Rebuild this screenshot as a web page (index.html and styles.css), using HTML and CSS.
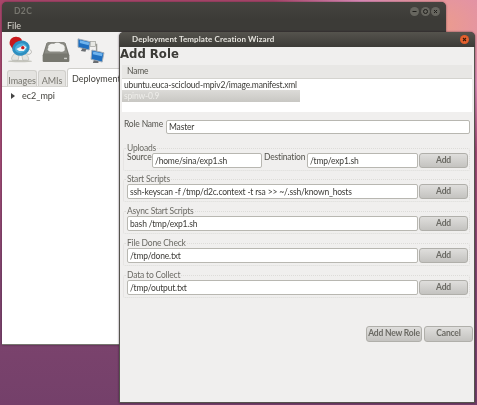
FILE: index.html
```html
<!DOCTYPE html>
<html lang="en">
<head>
<meta charset="utf-8">
<title>D2C</title>
<link rel="stylesheet" href="styles.css">
</head>
<body>
<div class="desktop">
  <section class="win main-win">
    <header class="win-title">
      <span class="win-name">D2C</span>
      <span class="win-controls">
        <span class="ctl"><svg viewBox="0 0 9 9"><path d="M2.500 4.500h4" stroke="#1f1e1b" stroke-width="1"/></svg></span>
        <span class="ctl"><svg viewBox="0 0 9 9"><circle cx="4.500" cy="4.500" r="2" fill="none" stroke="#1f1e1b" stroke-width="1"/></svg></span>
        <span class="ctl"><svg viewBox="0 0 9 9"><path d="M3 3l3 3M6 3l-3 3" stroke="#1f1e1b" stroke-width="1"/></svg></span>
      </span>
    </header>
    <nav class="menubar">File</nav>
    <div class="main-body">
      <div class="toolbar">
        <svg class="tool tool-a" viewBox="0 0 30 30" aria-hidden="true">
          <ellipse cx="15" cy="27" rx="13" ry="1.200" fill="#c4c4bc"/>
          <path d="M9 19c-3 3-4 6-2 7h6l1-5zM17 21l1 5h6c1-2-1-6-4-7z" fill="#e4e4e0" stroke="#a8a8a2" stroke-width=".6"/>
          <path d="M23 14c3 0 5 2 4 4s-3 2-5 1" fill="none" stroke="#b4b4ae" stroke-width="1"/>
          <path d="M4 9C3 3 8 0 12 1c3 0 5 2 5 4L7 14z" fill="#c8191c"/>
          <ellipse cx="16" cy="13" rx="9.500" ry="8" transform="rotate(-18 16 13)" fill="#2e8fc0"/>
          <ellipse cx="16" cy="13" rx="6.500" ry="5" transform="rotate(-18 16 13)" fill="#4fb0dc"/>
          <path d="M11 14l8-4 3 2-3 4-5 0z" fill="#f4f4f4"/>
          <circle cx="18" cy="12.500" r="1.800" fill="#c8191c"/>
        </svg>
        <svg class="tool tool-b" viewBox="1 2 28 21" aria-hidden="true">
          <path d="M5 3h20l4 13v6a1 1 0 0 1-1 1H2a1 1 0 0 1-1-1v-6z" fill="#77776f"/>
          <path d="M6 2h18l3 12H3z" fill="#8b8b84"/>
          <path d="M7 8c-1-3 3-5 6-4 2-2 6-1 7 0 3 0 5 3 4 5 1 2-2 4-5 3H10C7 12 5 10 7 8z" fill="#f1f1ee"/>
          <rect x="23.500" y="18.500" width="3" height="1.500" fill="#d0d0cb"/>
        </svg>
        <svg class="tool tool-c" viewBox="0 0 30 28" aria-hidden="true">
          <path d="M12 8h9v8" fill="none" stroke="#9a9a94" stroke-width="1.500"/>
          <rect x="14" y="5" width="6" height="5" fill="#e8e8e4" stroke="#8a8a84" stroke-width=".6"/>
          <path d="M1 2l13 3-1 9-12-3z" fill="#1f6fc0" stroke="#a8b0b8" stroke-width="1"/>
          <path d="M3 3.500l10 2.300-.5 3-9.500-2.300z" fill="#6fb4ee"/>
          <path d="M6 12l4 1-1 3-5-1z" fill="#6a6e72"/>
          <path d="M16 14l13 3-2 10-12-3z" fill="#1f6fc0" stroke="#a8b0b8" stroke-width="1"/>
          <path d="M17.500 15.500l10 2.300-.7 3-9.800-2.300z" fill="#6fb4ee"/>
          <path d="M18 25l5 1v2h-6z" fill="#6a6e72"/>
        </svg>
      </div>
      <div class="tabs">
        <span class="tab tab-images">Images</span>
        <span class="tab tab-amis">AMIs</span>
        <span class="tab tab-on">Deployment T</span>
      </div>
      <div class="tree">
        <span class="arrow"></span>
        <span>ec2_mpi</span>
      </div>
    </div>
  </section>

  <section class="win dialog">
    <header class="dlg-title">
      <span class="dlg-name">Deployment Template Creation Wizard</span>
      <span class="dlg-close"><svg viewBox="0 0 9 9"><path d="M3 3l3 3M6 3l-3 3" stroke="#3c1a08" stroke-width="1.100"/></svg></span>
    </header>
    <div class="dlg-body">
      <h1 class="heading">Add Role</h1>
      <div class="list">
        <div class="list-head">Name</div>
        <div class="list-rows">
          <div class="list-row">ubuntu.euca-scicloud-mpiv2/image.manifest.xml</div>
          <div class="list-sel">spinw-0.9</div>
        </div>
      </div>
      <div class="role-row">
        <label class="role-label">Role Name</label>
        <div class="field role-field">Master</div>
      </div>

      <fieldset class="group group-first">
        <legend class="legend">Uploads</legend>
        <div class="line">
          <span class="inline-label src-label">Source</span>
          <div class="field src">/home/sina/exp1.sh</div>
          <span class="inline-label dst-label">Destination</span>
          <div class="field dst">/tmp/exp1.sh</div>
          <button class="btn add">Add</button>
        </div>
      </fieldset>
      <fieldset class="group">
        <legend class="legend">Start Scripts</legend>
        <div class="line">
          <div class="field grow">ssh-keyscan -f /tmp/d2c.context -t rsa &gt;&gt; ~/.ssh/known_hosts</div>
          <button class="btn add">Add</button>
        </div>
      </fieldset>
      <fieldset class="group">
        <legend class="legend">Async Start Scripts</legend>
        <div class="line">
          <div class="field grow">bash /tmp/exp1.sh</div>
          <button class="btn add">Add</button>
        </div>
      </fieldset>
      <fieldset class="group">
        <legend class="legend">File Done Check</legend>
        <div class="line">
          <div class="field grow">/tmp/done.txt</div>
          <button class="btn add">Add</button>
        </div>
      </fieldset>
      <fieldset class="group">
        <legend class="legend">Data to Collect</legend>
        <div class="line">
          <div class="field grow">/tmp/output.txt</div>
          <button class="btn add">Add</button>
        </div>
      </fieldset>

      <div class="actions">
        <button class="btn new-role">Add New Role</button>
        <button class="btn cancel">Cancel</button>
      </div>
    </div>
  </section>
</div>
</body>
</html>
```
FILE: styles.css
```css
* { box-sizing: border-box; }
html, body { margin: 0; padding: 0; }
body { width: 477px; height: 405px; overflow: hidden; }

.desktop {
  position: relative;
  width: 477px;
  height: 405px;
  overflow: hidden;
  font-family: Lato, "Open Sans", sans-serif;
  font-size: 8.500px;
  letter-spacing: -.18px;
  line-height: 11px;
  color: #45443f;
  filter: blur(0.3px);
  background:
    radial-gradient(ellipse 170px 130px at 440px 25px, #ec9c8c 0%, #dc8cb8 50%, rgba(200,110,160,0) 100%),
    linear-gradient(180deg, #a8466a 0%, #a04a74 40%, #80456f 70%, #74406a 100%);
}

.win { position: absolute; }

/* main window */
.main-win {
  left: 2px;
  top: 2px;
  width: 444px;
  height: 343px;
  display: flex;
  flex-direction: column;
  border-radius: 5px 5px 0 0;
  background: #3c3b37;
  box-shadow: 0 0 2px rgba(30, 10, 30, .6);
  font-size: 9px;
  letter-spacing: 0;
}
.win-title {
  height: 18px;
  flex: none;
  display: flex;
  align-items: center;
  justify-content: space-between;
  padding: 0 6px 0 12px;
  border-radius: 5px 5px 0 0;
  background: linear-gradient(180deg, #45443f, #3c3b37);
}
.win-name { color: #77766f; font-size: 8.500px; font-weight: 700; letter-spacing: .4px; }
.win-controls { display: flex; gap: 1.500px; }
.ctl {
  width: 9px;
  height: 9px;
  border-radius: 50%;
  background: #67665f;
  display: block;
}
.ctl svg, .dlg-close svg { display: block; width: 100%; height: 100%; }
.menubar {
  height: 12px;
  flex: none;
  padding: 0 0 0 5px;
  color: #d8d6cf;
  line-height: 12px;
}
.main-body {
  flex: 1;
  display: flex;
  flex-direction: column;
  background: #fff;
  border-bottom: 1px solid #77766f;
}
.toolbar {
  height: 36px;
  flex: none;
  display: flex;
  align-items: flex-start;
  background: #f2f1f0;
  padding: 4px 0 0 4px;
}
.tool { display: block; flex: none; }
.tool-a { width: 28px; height: 28px; }
.tool-b { width: 28px; height: 20px; margin: 6px 0 0 8px; }
.tool-c { width: 28px; height: 26px; margin: 1px 0 0 7px; }

.tabs {
  height: 19px;
  flex: none;
  display: flex;
  align-items: flex-end;
  padding-left: 5px;
  gap: 1px;
  background: #f2f1f0;
  border-bottom: 1px solid #d6d5d1;
}
.tab {
  height: 16px;
  padding-top: 4px;
  text-align: center;
  color: #77766f;
  background: #e4e3e0;
  border: 1px solid #d0cfcb;
  border-bottom: 0;
  border-radius: 3px 3px 0 0;
  white-space: nowrap;
}
.tab-images { width: 30px; }
.tab-amis { width: 28px; }
.tab-on {
  width: 60px;
  height: 19px;
  margin-bottom: -1px;
  padding: 4px 0 0 4px;
  text-align: left;
  color: #45443f;
  background: #fff;
}
.tree {
  display: flex;
  align-items: center;
  padding: 3px 0 0 9px;
  gap: 7px;
}
.arrow {
  width: 0;
  height: 0;
  border-left: 4px solid #444;
  border-top: 3px solid transparent;
  border-bottom: 3px solid transparent;
}

/* dialog */
.dialog {
  left: 119px;
  top: 32px;
  width: 356px;
  height: 371px;
  display: flex;
  flex-direction: column;
  border-radius: 5px 5px 0 0;
  background: #3c3b37;
  box-shadow: 0 0 2px rgba(30, 10, 30, .7);
}
.dlg-title {
  height: 15px;
  flex: none;
  display: flex;
  align-items: center;
  justify-content: space-between;
  padding: 0 6px 0 13px;
  border-radius: 5px 5px 0 0;
  background: linear-gradient(180deg, #55534d, #3c3b37);
}
.dlg-name {
  color: #e4e2dc;
  font-size: 8px;
  font-weight: 700;
  letter-spacing: .12px;
}
.dlg-close {
  width: 9px;
  height: 9px;
  border-radius: 50%;
  background: radial-gradient(circle, #f07040, #d8501c);
  display: block;
}
.dlg-body {
  flex: 1;
  min-height: 0;
  background: #f0efee;
  border: 1px solid #55534d;
  border-top: 0;
  display: flex;
  flex-direction: column;
}
.heading {
  margin: 0;
  height: 15px;
  font-family: "DejaVu Sans", sans-serif;
  font-size: 11.700px;
  letter-spacing: 0;
  line-height: 15px;
  font-weight: 700;
  color: #3c3b37;
}
.list { margin: 3px 2px 0 2px; }
.list-head {
  height: 14px;
  padding: 1px 0 0 5px;
  line-height: 11px;
  background: #e8e7e5;
  border-bottom: 1px solid #d4d3cf;
  color: #55544e;
}
.list-rows { height: 33px; background: #fff; }
.list-row { height: 11px; padding: 1px 0 0 2px; line-height: 10px; color: #3c3b37; }
.list-sel {
  width: 178px;
  height: 12px;
  padding-left: 2px;
  line-height: 12px;
  color: #eeedea;
  background: linear-gradient(180deg, #dcdbd8, #c8c7c3);
}
.role-row {
  display: flex;
  align-items: flex-start;
  margin: 8px 4px 0 4px;
  gap: 4px;
}
.role-label { width: 38px; flex: none; white-space: nowrap; color: #55544e; margin-top: -1px; }

.group {
  margin: 4.750px 4px 0 3px;
  padding: 0 1px 2px 3px;
  border: 1px dotted #dddcd9;
  border-radius: 2px;
  min-width: 0;
}
.group-first { margin-top: 9.500px; }
.legend {
  padding: 0;
  height: 9px;
  line-height: 9px;
  color: #6b6a64;
}
.line { display: flex; align-items: flex-start; gap: 1px; height: 15px; }
.inline-label { flex: none; white-space: nowrap; color: #55544e; margin-top: -1px; }
.src-label { width: 24px; }
.dst-label { width: 42px; margin-left: 1px; }
.field {
  height: 15px;
  min-width: 0;
  padding: 0 2px;
  line-height: 14px;
  white-space: nowrap;
  overflow: hidden;
  color: #3c3b37;
  background: #fff;
  border: 1px solid #b8b7b1;
  border-radius: 2px;
}
.role-field { flex: 1; height: 14px; line-height: 13px; }
.grow { flex: 1; }
.src { width: 110px; flex: none; }
.dst { width: 111px; flex: none; }
.btn {
  height: 15px;
  padding: 0;
  font: inherit;
  letter-spacing: inherit;
  font-weight: 700;
  color: #6b6a64;
  background: linear-gradient(180deg, #dfdedc, #c4c3c0);
  border: 1px solid #b0afaa;
  border-radius: 3px;
}
.add { width: 49px; flex: none; }
.actions {
  display: flex;
  justify-content: flex-end;
  gap: 2px;
  margin: 28px 1px 0 0;
}
.new-role { width: 56px; height: 16px; white-space: nowrap; }
.cancel { width: 49px; height: 16px; }
```
